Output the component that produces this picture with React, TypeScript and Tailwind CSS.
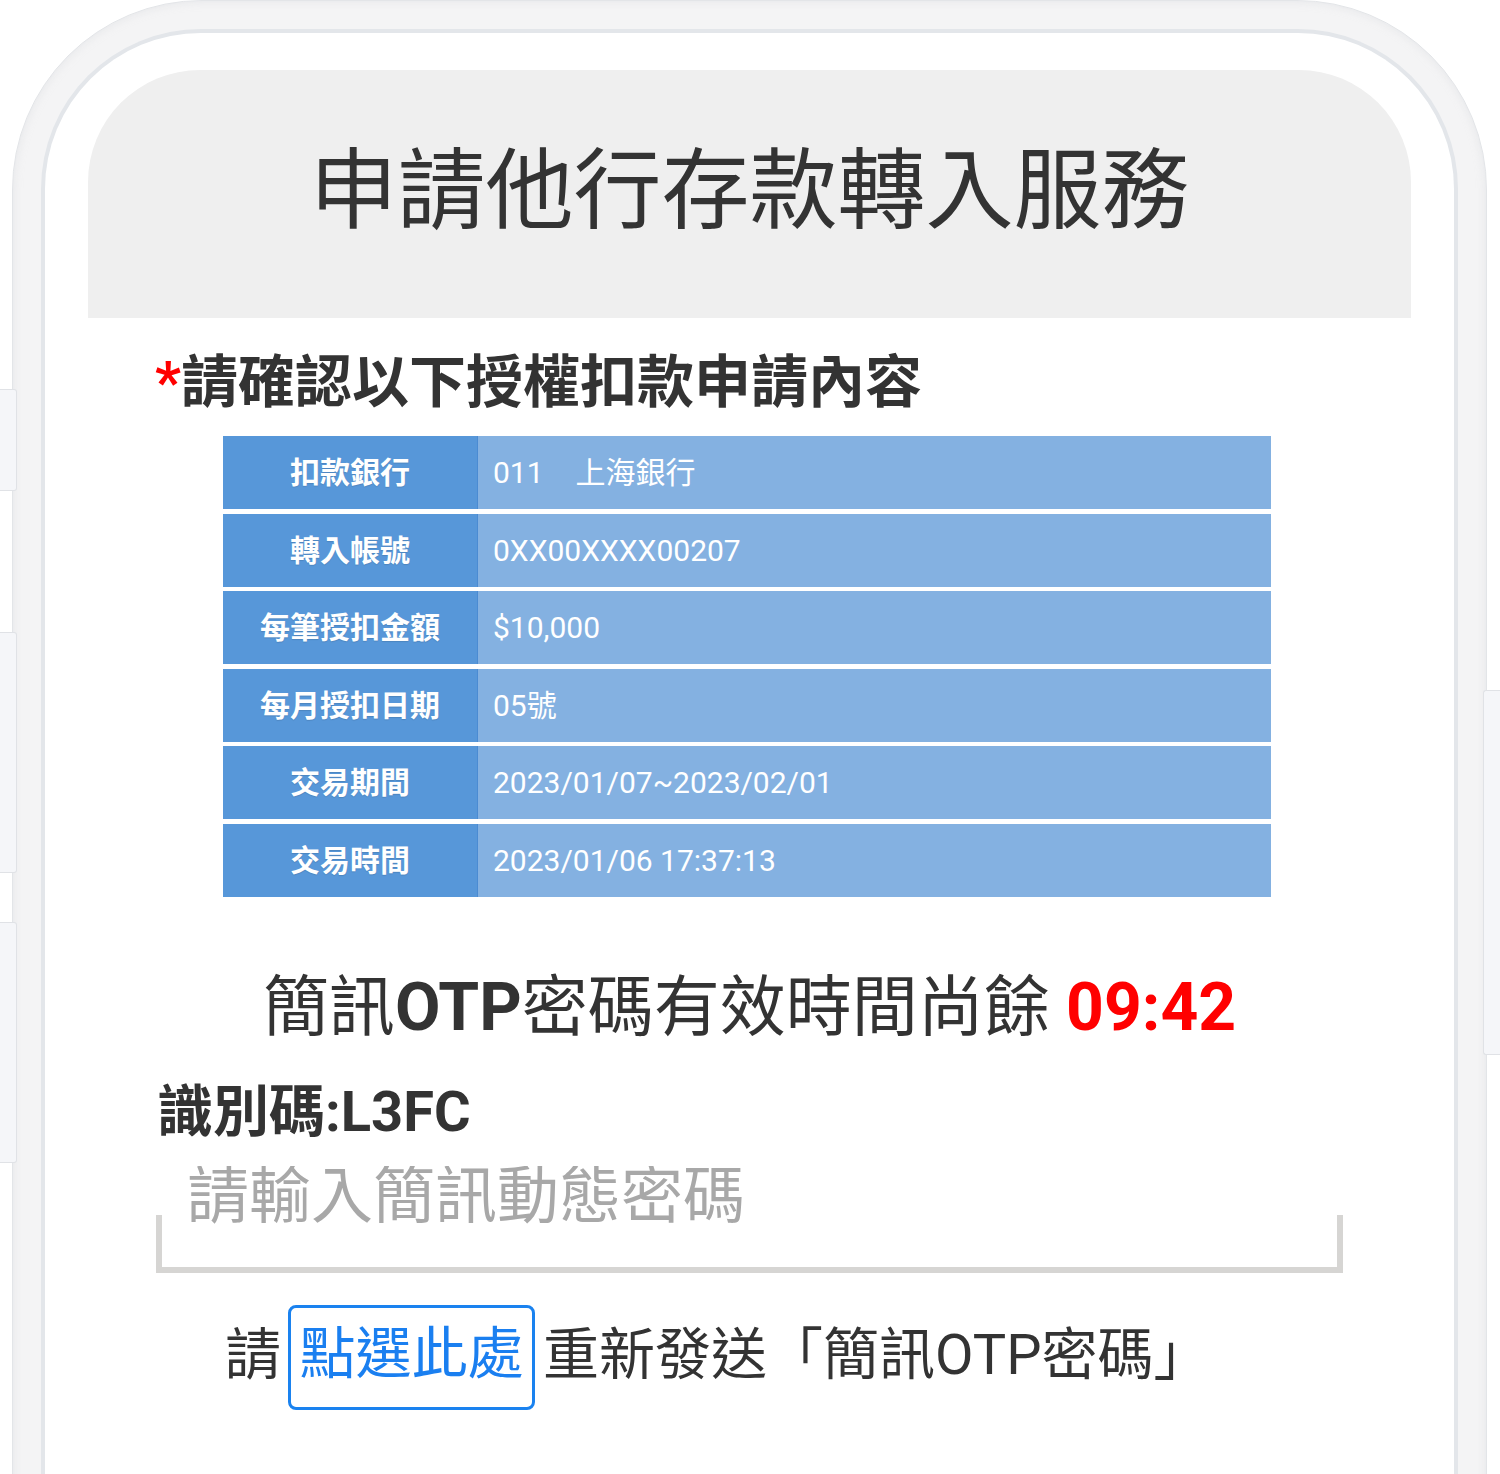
const rows = [
  {
    label: "扣款銀行",
    value: (
      <>
        011<span className="ml-[32px]">上海銀行</span>
      </>
    ),
  },
  { label: "轉入帳號", value: "0XX00XXXX00207" },
  { label: "每筆授扣金額", value: "$10,000" },
  { label: "每月授扣日期", value: "05號" },
  { label: "交易期間", value: "2023/01/07~2023/02/01" },
  { label: "交易時間", value: "2023/01/06 17:37:13" },
];

const SideKey = ({ className }: { className: string }) => (
  <div
    className={
      "absolute z-10 w-[17px] border border-[#e0e2e6] bg-[#f5f6f9] " +
      className
    }
  />
);

export default function App() {
  return (
    <div className="relative h-[1474px] w-[1500px] overflow-hidden bg-white font-[family-name:Roboto,'Noto_Sans_CJK_TC',sans-serif] text-[#333333]">
      {/* side keys of the phone */}
      <SideKey className="left-0 top-[389px] h-[102px] rounded-r-[3px] border-l-0" />
      <SideKey className="left-0 top-[632px] h-[241px] rounded-r-[3px] border-l-0" />
      <SideKey className="left-0 top-[922px] h-[241px] rounded-r-[3px] border-l-0" />
      <SideKey className="right-0 top-[690px] h-[365px] rounded-l-[3px] border-r-0" />

      {/* phone bezel */}
      <div className="ml-[12px] h-[1520px] w-[1475px] rounded-t-[190px] border border-[#e3e5e8] bg-[#f4f4f5] px-[28px] pt-[28px] shadow-[inset_0_0_10px_rgba(200,203,208,0.35)]">
        <div className="h-full rounded-t-[160px] border-4 border-b-0 border-[#e3e6ea] bg-white">
          {/* title bar */}
          <div className="mx-[43px] mt-[37px] flex h-[248px] items-center justify-center rounded-t-[112px] bg-[#efefef] pb-[6px]">
            <h1 className="text-[88px] leading-none font-normal">
              申請他行存款轉入服務
            </h1>
          </div>

          <h2 className="mt-[36px] pl-[110px] text-[57px] leading-[57px] font-bold">
            <span className="text-[#ff0000]">*</span>請確認以下授權扣款申請內容
          </h2>

          {/* summary table */}
          <div className="mt-[25px] ml-[178px] flex w-[1048px] flex-col gap-[4.6px]">
            {rows.map((row) => (
              <div key={row.label} className="flex h-[73px]">
                <div className="flex w-[255px] items-center justify-center border-r border-[#4b8bd2] bg-[#5797d9] text-[30px] font-bold text-white [text-shadow:0_1px_1px_rgba(0,0,0,0.12)]">
                  {row.label}
                </div>
                <div className="flex flex-1 items-center bg-[#84b1e1] pl-[15px] text-[30px] text-white">
                  {row.value}
                </div>
              </div>
            ))}
          </div>

          <p className="mt-[78px] text-center text-[66px] leading-[66px]">
            簡訊<span className="font-bold">OTP</span>密碼有效時間尚餘{" "}
            <span className="font-bold text-[#ff0000]">09:42</span>
          </p>

          <p className="mt-[43px] pl-[112px] text-[56px] leading-[56px] font-bold">
            識別碼:L3FC
          </p>

          {/* otp input */}
          <div className="mt-[26px] ml-[111px] w-[1187px]">
            <input
              type="text"
              placeholder="請輸入簡訊動態密碼"
              className="block h-[62px] w-full bg-transparent pl-[31px] text-[62px] leading-[62px] text-[#333333] outline-none placeholder:text-[#a8a8a8]"
            />
            <div className="-mt-[13px] h-[58px] border-x-[6px] border-b-[6px] border-[#d6d5d3]" />
          </div>

          <div className="mt-[32px] flex items-start pl-[180px] text-[56px] leading-[56px]">
            <span className="mt-[22px]">請</span>
            <a
              href="#"
              className="ml-[7px] flex h-[105px] w-[247px] items-center justify-center rounded-[8px] border-[3px] border-[#1a82ef] pb-[6px] text-[#1a7ff0]"
            >
              點選此處
            </a>
            <span className="mt-[22px] ml-[8px]">重新發送「簡訊OTP密碼」</span>
          </div>
        </div>
      </div>
    </div>
  );
}
